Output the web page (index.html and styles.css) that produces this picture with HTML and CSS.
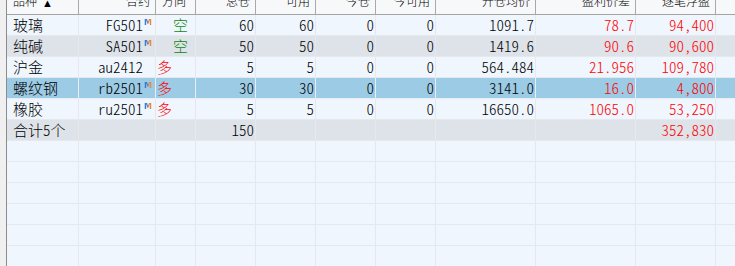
FILE: index.html
```html
<!DOCTYPE html>
<html lang="zh">
<head>
<meta charset="utf-8">
<link rel="stylesheet" href="styles.css">
</head>
<body>
<div class="frame">
  <div class="strip"></div>
  <div class="grid">
    <div class="hd l">品种<span class="arrow">▲</span></div>
    <div class="hd">合约</div>
    <div class="hd l">方向</div>
    <div class="hd">总仓</div>
    <div class="hd">可用</div>
    <div class="hd">今仓</div>
    <div class="hd">今可用</div>
    <div class="hd">开仓均价</div>
    <div class="hd">盈利价差</div>
    <div class="hd">逐笔浮盈</div>
    <div class="hd last"></div>

    <div class="c name odd">玻璃</div>
    <div class="c r odd">FG501<span class="m">M</span></div>
    <div class="c dir odd"><span class="kong">空</span></div>
    <div class="c r odd">60</div>
    <div class="c r odd">60</div>
    <div class="c r odd">0</div>
    <div class="c r odd">0</div>
    <div class="c r odd">1091.7</div>
    <div class="c r odd red">78.7</div>
    <div class="c r odd red">94,400</div>
    <div class="c odd last"></div>

    <div class="c name even">纯碱</div>
    <div class="c r even">SA501<span class="m">M</span></div>
    <div class="c dir even"><span class="kong">空</span></div>
    <div class="c r even">50</div>
    <div class="c r even">50</div>
    <div class="c r even">0</div>
    <div class="c r even">0</div>
    <div class="c r even">1419.6</div>
    <div class="c r even red">90.6</div>
    <div class="c r even red">90,600</div>
    <div class="c even last"></div>

    <div class="c name odd">沪金</div>
    <div class="c r odd">au2412<span class="m hide">M</span></div>
    <div class="c dir odd"><span class="duo">多</span></div>
    <div class="c r odd">5</div>
    <div class="c r odd">5</div>
    <div class="c r odd">0</div>
    <div class="c r odd">0</div>
    <div class="c r odd">564.484</div>
    <div class="c r odd red">21.956</div>
    <div class="c r odd red">109,780</div>
    <div class="c odd last"></div>

    <div class="c name sel">螺纹钢</div>
    <div class="c r sel">rb2501<span class="m">M</span></div>
    <div class="c dir sel"><span class="duo">多</span></div>
    <div class="c r sel">30</div>
    <div class="c r sel">30</div>
    <div class="c r sel">0</div>
    <div class="c r sel">0</div>
    <div class="c r sel">3141.0</div>
    <div class="c r sel red">16.0</div>
    <div class="c r sel red">4,800</div>
    <div class="c sel last"></div>

    <div class="c name odd">橡胶</div>
    <div class="c r odd">ru2501<span class="m">M</span></div>
    <div class="c dir odd"><span class="duo">多</span></div>
    <div class="c r odd">5</div>
    <div class="c r odd">5</div>
    <div class="c r odd">0</div>
    <div class="c r odd">0</div>
    <div class="c r odd">16650.0</div>
    <div class="c r odd red">1065.0</div>
    <div class="c r odd red">53,250</div>
    <div class="c odd last"></div>

    <div class="c name even">合计5个</div>
    <div class="c even"></div>
    <div class="c even"></div>
    <div class="c r even">150</div>
    <div class="c even"></div>
    <div class="c even"></div>
    <div class="c even"></div>
    <div class="c even"></div>
    <div class="c even"></div>
    <div class="c r even red">352,830</div>
    <div class="c even last"></div>

    <div class="c odd"></div><div class="c odd"></div><div class="c odd"></div><div class="c odd"></div><div class="c odd"></div><div class="c odd"></div><div class="c odd"></div><div class="c odd"></div><div class="c odd"></div><div class="c odd"></div><div class="c odd last"></div>
    <div class="c odd"></div><div class="c odd"></div><div class="c odd"></div><div class="c odd"></div><div class="c odd"></div><div class="c odd"></div><div class="c odd"></div><div class="c odd"></div><div class="c odd"></div><div class="c odd"></div><div class="c odd last"></div>
    <div class="c odd"></div><div class="c odd"></div><div class="c odd"></div><div class="c odd"></div><div class="c odd"></div><div class="c odd"></div><div class="c odd"></div><div class="c odd"></div><div class="c odd"></div><div class="c odd"></div><div class="c odd last"></div>
    <div class="c odd"></div><div class="c odd"></div><div class="c odd"></div><div class="c odd"></div><div class="c odd"></div><div class="c odd"></div><div class="c odd"></div><div class="c odd"></div><div class="c odd"></div><div class="c odd"></div><div class="c odd last"></div>
    <div class="c odd"></div><div class="c odd"></div><div class="c odd"></div><div class="c odd"></div><div class="c odd"></div><div class="c odd"></div><div class="c odd"></div><div class="c odd"></div><div class="c odd"></div><div class="c odd"></div><div class="c odd last"></div>
    <div class="c odd"></div><div class="c odd"></div><div class="c odd"></div><div class="c odd"></div><div class="c odd"></div><div class="c odd"></div><div class="c odd"></div><div class="c odd"></div><div class="c odd"></div><div class="c odd"></div><div class="c odd last"></div>
  </div>
</div>
</body>
</html>
```

FILE: styles.css
```css
html, body {
  margin: 0;
  padding: 0;
  background: #eff6fe;
  overflow: hidden;
}

.frame {
  display: flex;
  width: 735px;
  height: 266px;
  overflow: hidden;
  font-family: "Noto Sans CJK SC", "Noto Sans", sans-serif;
  font-feature-settings: "hwid" 1;
  font-size: 15px;
  font-weight: 300;
  color: #000;
}

.strip {
  width: 6px;
  flex: none;
  background: #f0f0f0;
  border-right: 1px solid #8c8c8c;
}

.grid {
  flex: 1;
  display: grid;
  grid-template-columns: 72px 77px 40px 60px 60px 60px 60px 100px 100px 80px 1fr;
  grid-template-rows: 15px;
  grid-auto-rows: 21px;
  align-content: start;
}

.hd {
  box-sizing: border-box;
  height: 15px;
  background: #f7f8fa;
  border-bottom: 1px solid #a4a4a4;
  border-right: 1px solid #a9a9a9;
  font-size: 12px;
  line-height: 12px;
  display: flex;
  justify-content: flex-end;
  align-items: flex-end;
  padding: 0 5px 7px 0;
  overflow: hidden;
  white-space: nowrap;
}

.hd.l {
  justify-content: flex-start;
  padding-left: 6px;
}

.hd.last {
  border-right: none;
}

.arrow {
  font-family: "DejaVu Sans", sans-serif;
  font-size: 11px;
  line-height: 11px;
  margin-left: 5px;
  margin-bottom: -2px;
}

.c {
  box-sizing: border-box;
  border-right: 1px solid #e6e8ec;
  border-bottom: 1px solid #e6e8ec;
  line-height: 20px;
  white-space: nowrap;
  overflow: hidden;
}

.c.last {
  border-right: none;
}

.r {
  text-align: right;
  padding-right: 1px;
}

.name {
  padding-left: 6px;
}

.odd { background: #eff6fe; }
.even { background: #dee3ea; }
.sel { background: #9ccbe5; border-right-color: #e8eef4; border-bottom-color: #e8eef4; }

.red { color: #ff0000; }

.m {
  display: inline-block;
  font-family: "DejaVu Sans", sans-serif;
  font-size: 8px;
  line-height: 8px;
  vertical-align: 6px;
  margin-left: 1px;
  margin-right: 2px;
  font-weight: bold;
  background: linear-gradient(90deg, #3f77c9 0%, #3f77c9 40%, #e08a45 60%, #e08a45 100%);
  -webkit-background-clip: text;
  background-clip: text;
  color: transparent;
}

.m.hide {
  visibility: hidden;
}

.dir {
  padding-left: 1px;
}

.kong {
  color: #0a8a0a;
  padding-left: 16px;
}

.duo {
  color: #ff0000;
}
```
